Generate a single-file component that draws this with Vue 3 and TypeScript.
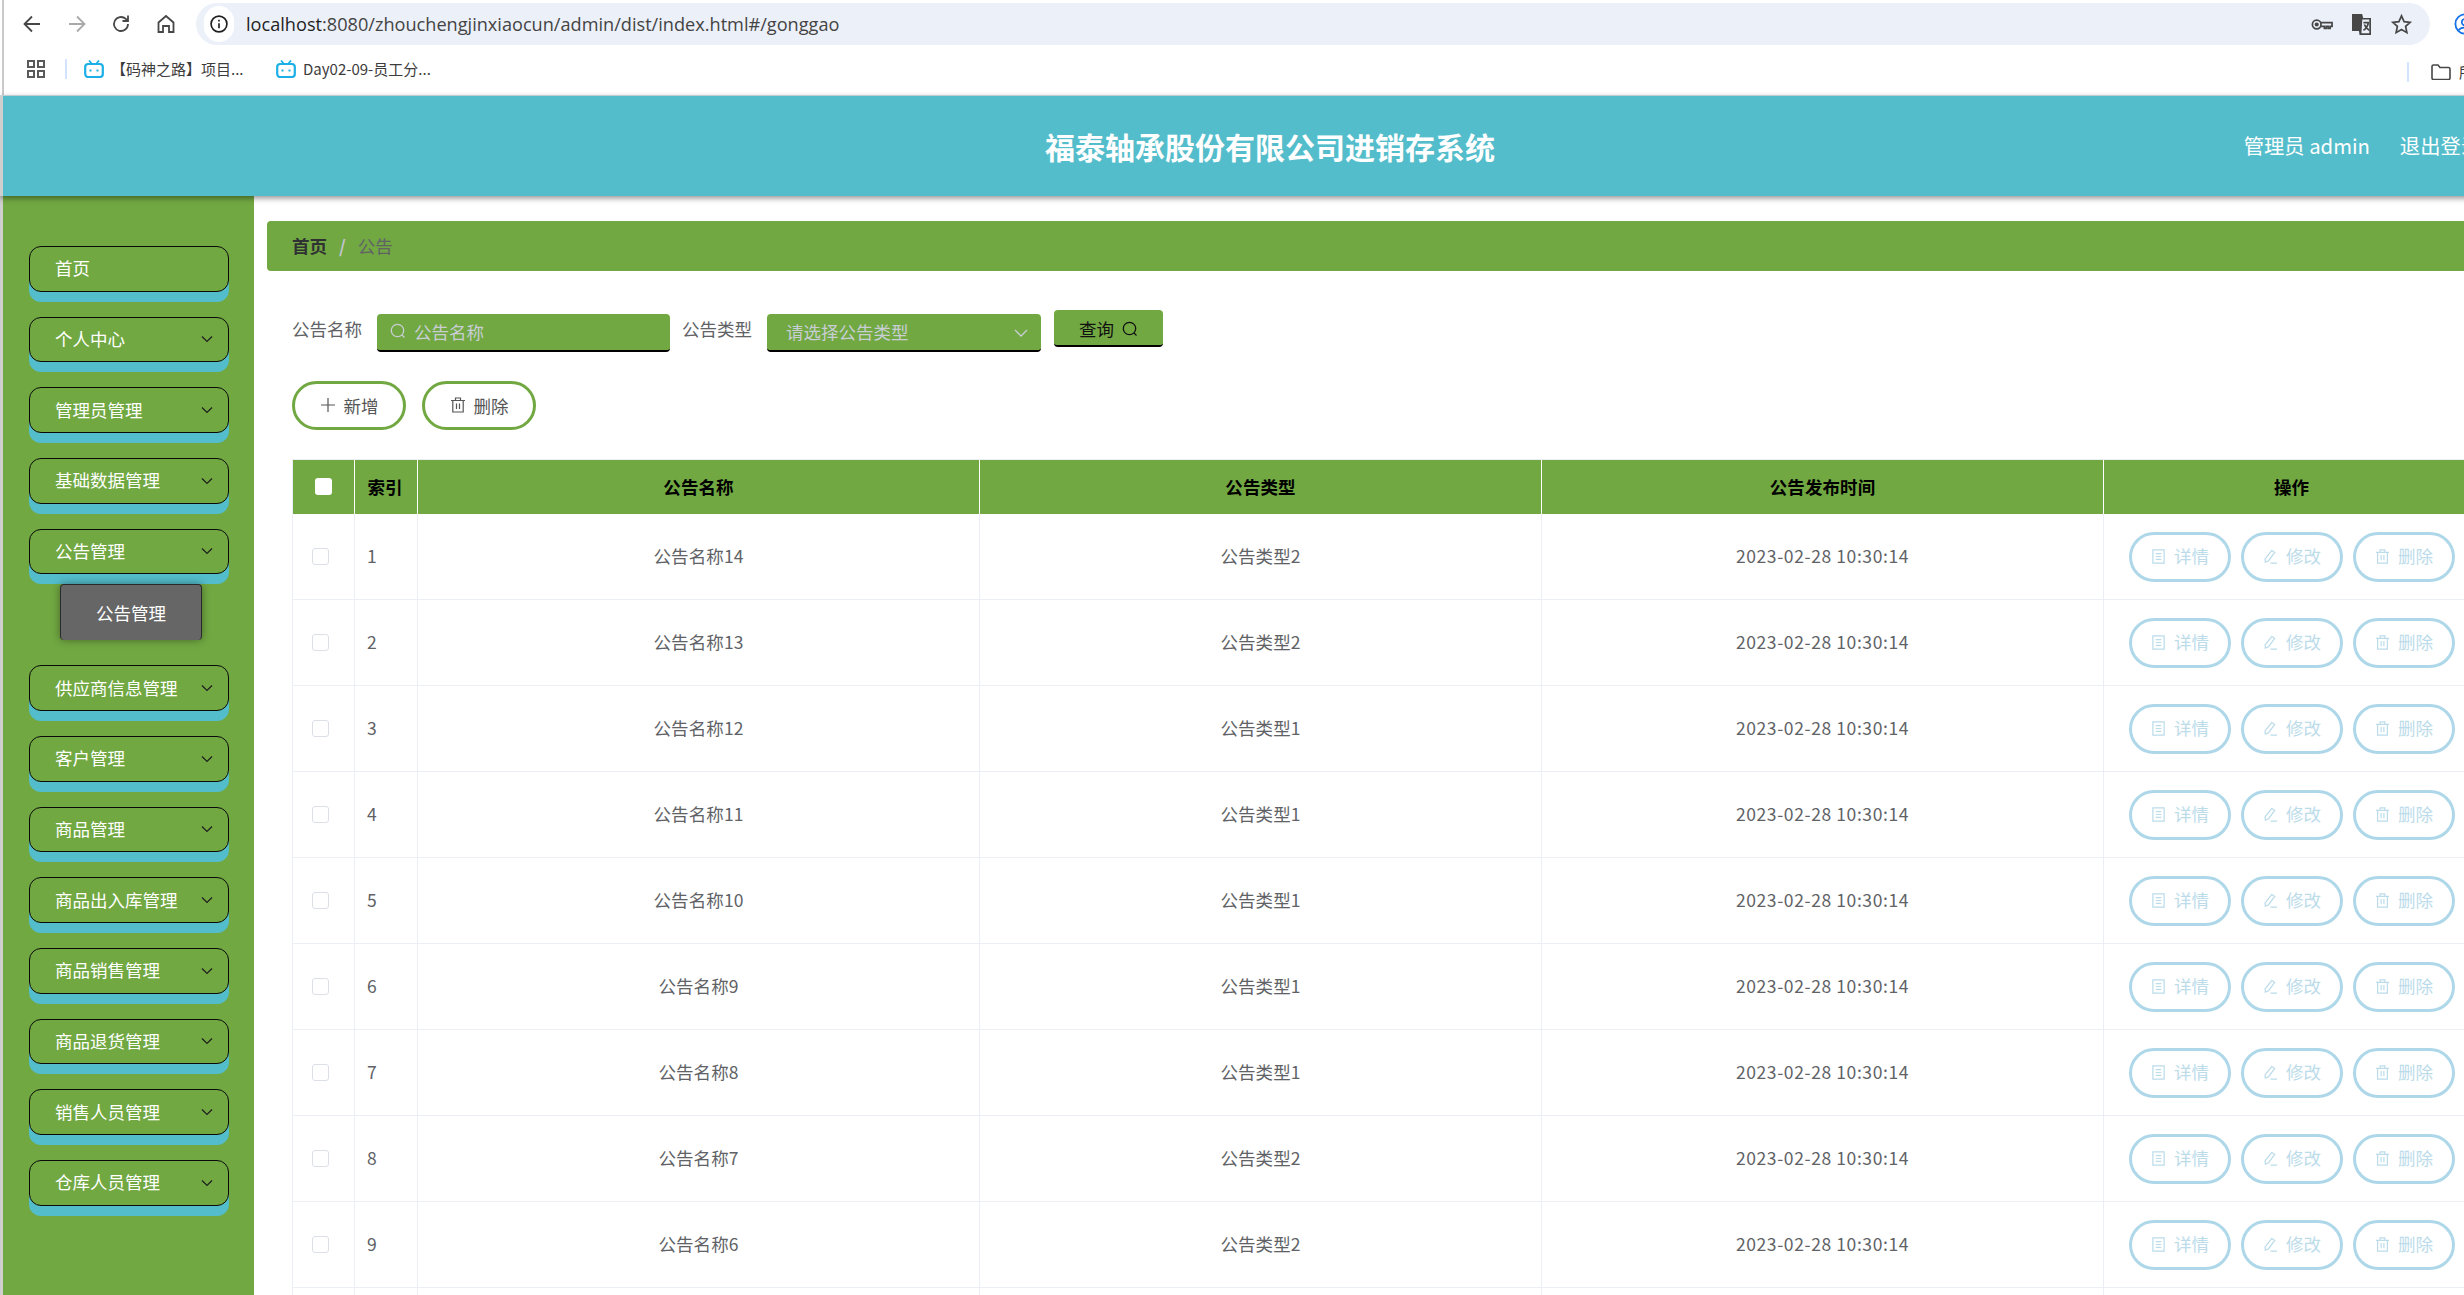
<script setup lang="ts">
interface Row { idx: number; name: string; type: string }
const menus = [
  { label: '首页', arrow: false },
  { label: '个人中心', arrow: true },
  { label: '管理员管理', arrow: true },
  { label: '基础数据管理', arrow: true },
  { label: '公告管理', arrow: true, sub: '公告管理' },
  { label: '供应商信息管理', arrow: true },
  { label: '客户管理', arrow: true },
  { label: '商品管理', arrow: true },
  { label: '商品出入库管理', arrow: true },
  { label: '商品销售管理', arrow: true },
  { label: '商品退货管理', arrow: true },
  { label: '销售人员管理', arrow: true },
  { label: '仓库人员管理', arrow: true },
]
const types = [2, 2, 1, 1, 1, 1, 1, 2, 2, 1]
const rows: Row[] = types.map((t, i) => ({ idx: i + 1, name: '公告名称' + (14 - i), type: '公告类型' + t }))
</script>

<template>
  <div class="page">
    <div class="chrome">
      <div class="toolbar">
        <div class="nav">
          <svg class="nav-ic" viewBox="0 0 24 24"><path d="M20 12H5M12 4.500L4.500 12l7.500 7.500" /></svg>
          <svg class="nav-ic faint" viewBox="0 0 24 24"><path d="M4 12h15M12 4.500l7.500 7.500-7.500 7.500" /></svg>
          <svg class="nav-ic" viewBox="0 0 24 24"><path d="M19 12a7 7 0 1 1-2.200-5.100L19 9M19 3.500V9h-5.500" /></svg>
          <svg class="nav-ic" viewBox="0 0 24 24"><path d="M4.500 10.500 12 4l7.500 6.500V20H15v-6H9v6H4.500z" /></svg>
        </div>
        <div class="omnibox">
          <span class="info-wrap">
            <svg class="info" viewBox="0 0 24 24"><circle cx="12" cy="12" r="9.500" /><path d="M12 11v6M12 7v2" /></svg>
          </span>
          <span class="url"><span class="url-host">localhost</span>:8080/zhouchengjinxiaocun/admin/dist/index.html#/gonggao</span>
          <span class="omni-right">
            <svg class="omni-ic" viewBox="0 0 24 24"><circle cx="7" cy="12" r="4.500" /><circle cx="7" cy="12" r="1.300" class="solid" /><path d="M11.500 10H23v4h-2v2h-2v-2h-2v2h-2v-2h-3.500" /></svg>
            <svg class="omni-ic" viewBox="0 0 24 24"><path class="solid" d="M3 2h9l1 4h7v16h-9l-1-4H3z" /><path class="paper" d="M12 6h9v16h-10z" /><path d="M14 10h6M17 9v2M19 11c-1 4-3 6-5 7M15 12c1 3 3 5 5 6" /></svg>
            <svg class="omni-ic" viewBox="0 0 24 24"><path d="m12 3 2.700 6 6.300.700-4.700 4.300 1.300 6.500L12 17.200l-5.600 3.300L7.700 14 3 9.700 9.300 9z" /></svg>
          </span>
        </div>
        <svg class="profile" viewBox="0 0 24 24"><circle cx="12" cy="12" r="10.500" /><circle cx="12" cy="10" r="3.500" /><path d="M5 19c2-4 12-4 14 0" /></svg>
      </div>
      <div class="bookmarks">
        <svg class="apps" viewBox="0 0 18 18"><rect x="1" y="1" width="6" height="6" /><rect x="11" y="1" width="6" height="6" /><rect x="1" y="11" width="6" height="6" /><rect x="11" y="11" width="6" height="6" /></svg>
        <span class="bm-sep"></span>
        <span class="bm bm-first">
          <svg class="tv" viewBox="0 0 20 18"><path class="tv-ears" d="M5 .5l3 3.500M15 .5 12 4" /><rect x="1.200" y="4" width="17.600" height="13" rx="3" /><path class="tv-eyes" d="M6.500 9.500v2M13.500 9.500v2" /></svg>
          【码神之路】项目...
        </span>
        <span class="bm bm-second">
          <svg class="tv" viewBox="0 0 20 18"><path class="tv-ears" d="M5 .5l3 3.500M15 .5 12 4" /><rect x="1.200" y="4" width="17.600" height="13" rx="3" /><path class="tv-eyes" d="M6.500 9.500v2M13.500 9.500v2" /></svg>
          Day02-09-员工分...
        </span>
        <span class="bm-right">
          <span class="bm-sep"></span>
          <svg class="folder" viewBox="0 0 20 16"><path d="M1 14V2.500C1 1.700 1.700 1 2.500 1H7l2 2.500h8.500c.8 0 1.500.7 1.500 1.500v9c0 .8-.7 1.500-1.500 1.500h-15C1.700 15.500 1 14.800 1 14z" /></svg>
          <span class="bm-clip">所有书签</span>
        </span>
      </div>
    </div>

    <header class="topbar">
      <h1 class="title">福泰轴承股份有限公司进销存系统</h1>
      <div class="user">
        <span>管理员 admin</span>
        <span>退出登录</span>
      </div>
    </header>

    <div class="body">
      <aside class="side">
        <div v-for="m in menus" :key="m.label" class="menu-group">
          <div class="menu-item">
            <span>{{ m.label }}</span>
            <svg v-if="m.arrow" class="chev" viewBox="0 0 12 8"><path d="M1 1.500 6 6.500l5-5" /></svg>
          </div>
          <div v-if="m.sub" class="sub-item">{{ m.sub }}</div>
        </div>
      </aside>

      <main class="main">
        <div class="crumb">
          <b>首页</b><i>/</i><span>公告</span>
        </div>

        <div class="filters">
          <label class="f-label">公告名称</label>
          <div class="input">
            <svg class="search" viewBox="0 0 16 16"><circle cx="7.500" cy="7.500" r="6.200" /><path d="m12 12 2.500 2.500" /></svg>
            <span>公告名称</span>
          </div>
          <label class="f-label type-label">公告类型</label>
          <div class="input select">
            <span>请选择公告类型</span>
            <svg class="sel-chev" viewBox="0 0 14 8"><path d="M1 1l6 6 6-6" /></svg>
          </div>
          <div class="query">
            <span>查询</span>
            <svg class="search dark" viewBox="0 0 16 16"><circle cx="7.500" cy="7.500" r="6.200" /><path d="m12 12 2.500 2.500" /></svg>
          </div>
        </div>

        <div class="actions">
          <div class="pill">
            <svg class="pill-ic" viewBox="0 0 16 16"><path d="M8 1v14M1 8h14" /></svg>
            <span>新增</span>
          </div>
          <div class="pill">
            <svg class="pill-ic" viewBox="0 0 16 16"><path d="M1 3.500h14M5.500 3.500V1h5v2.500M2.800 3.500v11.500h10.400V3.500M6.500 6.500v5.500M9.500 6.500v5.500" /></svg>
            <span>删除</span>
          </div>
        </div>

        <div class="table">
          <div class="tr th">
            <div class="c c-check"><span class="box head-box"></span></div>
            <div class="c c-idx center">索引</div>
            <div class="c c-col">公告名称</div>
            <div class="c c-col">公告类型</div>
            <div class="c c-col">公告发布时间</div>
            <div class="c c-op">操作</div>
          </div>
          <div v-for="r in rows" :key="r.idx" class="tr td">
            <div class="c c-check"><span class="box"></span></div>
            <div class="c c-idx">{{ r.idx }}</div>
            <div class="c c-col">{{ r.name }}</div>
            <div class="c c-col">{{ r.type }}</div>
            <div class="c c-col date">2023-02-28 10:30:14</div>
            <div class="c c-op ops">
              <div class="op">
                <svg class="op-ic" viewBox="0 0 16 16"><path d="M2 1h12v14H2zM5 5h6M5 8h6M5 11h6" /></svg>
                <span>详情</span>
              </div>
              <div class="op">
                <svg class="op-ic" viewBox="0 0 16 16"><path d="M9.500 1.500 12.500 3.500 6 12.500l-3.500 1.500-.3-3.500zM8 15h7" /></svg>
                <span>修改</span>
              </div>
              <div class="op">
                <svg class="op-ic" viewBox="0 0 16 16"><path d="M1 3.500h14M5.500 3.500V1h5v2.500M2.800 3.500v11.500h10.400V3.500M6.500 6.500v5.500M9.500 6.500v5.500" /></svg>
                <span>删除</span>
              </div>
            </div>
          </div>
        </div>
      </main>
    </div>
  </div>
</template>

<style>
html, body { margin: 0; height: 100%; overflow: hidden; background: #fff; }
</style>

<style scoped>
.page {
  width: 2535px;
  height: 1295px;
  overflow: hidden;
  display: flex;
  flex-direction: column;
  font-family: "Noto Sans CJK SC", sans-serif;
  font-size: 17.500px;
  color: #606266;
  background: #fff;
}
svg { fill: none; flex: none; }

/* browser chrome */
.chrome { height: 95px; flex: none; background: #fff; border-bottom: 1px solid #d5e3e8; position: relative; }
.chrome::before { content: ""; position: absolute; left: 2px; top: 0; bottom: 0; width: 2px; background: #c9c9c9; }
.toolbar { height: 48px; padding: 3px 0 0 20px; display: flex; box-sizing: border-box; }
.nav { display: flex; gap: 20.700px; align-items: center; height: 42px; width: 176px; flex: none; }
.nav-ic { width: 24px; height: 24px; stroke: #474747; stroke-width: 1.800; }
.nav-ic.faint { stroke: #a9a9a9; }
.omnibox {
  width: 2234px;
  height: 42px;
  background: #ecf0f9;
  border-radius: 21px;
  display: flex;
  align-items: center;
  padding-left: 8px;
  box-sizing: border-box;
  flex: none;
}
.info-wrap { width: 30px; height: 36px; display: flex; align-items: center; justify-content: center; background: #fff; border-radius: 18px; }
.info { width: 20px; height: 20px; stroke: #1f1f1f; stroke-width: 2; }
.url { margin-left: 12px; font-family: "Open Sans", sans-serif; font-size: 18.150px; color: #444; letter-spacing: 0; }
.url-host { color: #1f1f1f; }
.omni-right { margin-left: auto; display: flex; gap: 17px; padding-right: 17px; }
.omni-ic { width: 23px; height: 23px; stroke: #474747; stroke-width: 1.800; }
.omni-ic .solid { fill: #474747; }
.omni-ic .paper { fill: #ecf0f9; }
.profile { width: 22px; height: 22px; stroke: #1a73e8; stroke-width: 2; margin: 10px 0 0 24px; }

.bookmarks { height: 47px; padding: 0 0 6px 27px; display: flex; align-items: center; font-size: 15px; color: #3c3c3c; position: relative; box-sizing: border-box; }
.apps { width: 18px; height: 18px; stroke: #5a5a5a; stroke-width: 2; }
.bm-sep { width: 2px; height: 20px; background: #d3e3fd; margin-left: 20px; flex: none; }
.bm { display: flex; align-items: center; gap: 7px; white-space: nowrap; }
.bm-first { margin-left: 17px; width: 192px; }
.bm-second { margin-left: 0; }
.tv { width: 20px; height: 18px; }
.tv rect { fill: #fff; stroke: #1cb0e6; stroke-width: 2.200; }
.tv-ears { stroke: #1cb0e6; stroke-width: 1.800; }
.tv-eyes { stroke: #1cb0e6; stroke-width: 2; }
.bm-right { position: absolute; left: 2407px; top: 13px; display: flex; align-items: center; width: 100px; }
.bm-right .bm-sep { margin-left: 0; }
.folder { width: 20px; height: 16px; stroke: #474747; stroke-width: 1.600; margin-left: 22px; }
.bm-clip { margin-left: 8px; white-space: nowrap; }

/* header */
.topbar {
  height: 100px;
  flex: none;
  border-left: 3px solid #cfcfcf;
  background: #54bdcb;
  box-shadow: 0 2px 6px rgba(0, 0, 0, .45);
  position: relative;
  z-index: 2;
  display: flex;
  align-items: center;
  justify-content: center;
  color: #fff;
  padding-left: 2px;
}
.title { margin: 0; font-size: 30px; font-weight: 700; line-height: 1; }
.user { position: absolute; right: 54px; top: 0; bottom: 0; display: flex; align-items: center; gap: 30px; font-size: 20.300px; padding-bottom: 2px; box-sizing: border-box; }

.body { flex: 1; display: flex; min-height: 0; border-left: 3px solid #cfcfcf; }

/* sidebar */
.side { width: 251px; flex: none; background: #71a842; padding: 50px 0 0 26px; box-sizing: border-box; }
.menu-group { margin-bottom: 25px; }
.menu-item {
  width: 200px;
  height: 45.670px;
  box-sizing: border-box;
  border: 1.500px solid #0a0a0a;
  border-radius: 12px;
  background: #71a842;
  box-shadow: 0 10px 0 #54bdcb;
  color: #fff;
  padding: 0 15px 2px 25px;
  display: flex;
  align-items: center;
  justify-content: space-between;
}
.chev { width: 12px; height: 8px; stroke: #1e1e1e; stroke-width: 1.200; margin-top: 2px; }
.sub-item {
  width: 142px;
  height: 56px;
  margin: 10px 0 0 31px;
  background: #666;
  color: #fff;
  border: 1px solid #2a2a2a;
  border-width: 1px 1px 0 1px;
  border-radius: 4px;
  box-sizing: border-box;
  box-shadow: 0 0 8px rgba(0, 0, 0, .4);
  display: flex;
  align-items: center;
  justify-content: center;
}

/* main */
.main { flex: 1; padding: 25px 0 0 13px; min-width: 0; }
.crumb {
  height: 50px;
  background: #71a842;
  border-radius: 4px;
  display: flex;
  align-items: center;
  padding: 0 0 2px 25px;
  box-sizing: border-box;
  color: #606266;
}
.crumb b { color: #303133; font-weight: 700; }
.crumb i { font-style: normal; color: #c0c4cc; font-weight: 700; margin: 0 12px; }

.filters { display: flex; align-items: flex-start; margin: 43px 0 0 25px; height: 38px; }
.f-label { line-height: 30px; color: #606266; width: 85px; flex: none; }
.type-label { width: 85px; margin-left: 12px; }
.input {
  width: 293px;
  height: 38px;
  box-sizing: border-box;
  background: #71a842;
  border-bottom: 2px solid #000;
  border-radius: 4px;
  display: flex;
  align-items: center;
  color: #c8ced4;
  padding: 0 0 2px 13px;
  gap: 8px;
  flex: none;
}
.search { width: 16px; height: 16px; stroke: #c8ced4; stroke-width: 1.300; }
.search.dark { stroke: #111; }
.select { width: 274px; padding: 0 13px 2px 19px; justify-content: space-between; }
.sel-chev { width: 14px; height: 8px; stroke: #c8ced4; stroke-width: 1.300; margin-top: 3px; }
.query {
  width: 109px;
  height: 37px;
  box-sizing: border-box;
  margin: -4px 0 0 13px;
  padding-top: 2px;
  background: #71a842;
  border-bottom: 2px solid #000;
  border-radius: 4px;
  display: flex;
  align-items: center;
  justify-content: center;
  gap: 8px;
  color: #111;
  flex: none;
}

.actions { display: flex; gap: 16px; margin: 29px 0 0 25px; }
.pill {
  width: 114px;
  height: 49px;
  box-sizing: border-box;
  border: 3px solid #71a842;
  border-radius: 25px;
  background: #fff;
  display: flex;
  align-items: center;
  justify-content: center;
  gap: 8px;
  color: #555;
  padding-bottom: 1px;
}
.pill-ic { width: 16px; height: 16px; stroke: #555; stroke-width: 1.200; }

.table { margin: 29px 0 0 25px; width: 2188px; border-left: 1px solid #ebeef5; border-top: 1px solid #ebeef5; }
.tr { display: flex; }
.c {
  box-sizing: border-box;
  display: flex;
  align-items: center;
  justify-content: center;
  flex: none;
  border-right: 1px solid #ebeef5;
  border-bottom: 1px solid #ebeef5;
}
.c-check { width: 62px; }
.c-idx { width: 63px; justify-content: flex-start; padding-left: 12px; }
.c-idx.center { justify-content: center; padding: 0 2px 2px 0; }
.c-col { width: 562px; letter-spacing: .1px; }
.c-op { width: 376px; }
.date { letter-spacing: .6px; }
.th { height: 54px; background: #71a842; color: #000; font-weight: 700; }
.th .c { border-color: #fff; border-bottom: none; border-right-width: 1.500px; padding-bottom: 2px; }
.td { height: 86px; }
.td .c { padding-bottom: 2px; }
.td .c-check { padding-bottom: 0; }
.td .ops { padding-bottom: 0; }
.box { width: 17px; height: 17px; border: 1.500px solid #dcdfe6; border-radius: 3px; box-sizing: border-box; background: #fff; margin-right: 6px; }
.head-box { border: none; margin: 0; background: #fff; }
.ops { justify-content: flex-start; padding-left: 25px; gap: 10px; }
.op {
  width: 102px;
  height: 50px;
  box-sizing: border-box;
  border: 3px solid #aed8e9;
  border-radius: 25px;
  display: flex;
  align-items: center;
  justify-content: center;
  gap: 8px;
  color: #bcdcea;
  flex: none;
  padding-bottom: 2px;
}
.op-ic { width: 15px; height: 15px; stroke: #bcdcea; stroke-width: 1.300; margin-top: 1px; }
</style>
